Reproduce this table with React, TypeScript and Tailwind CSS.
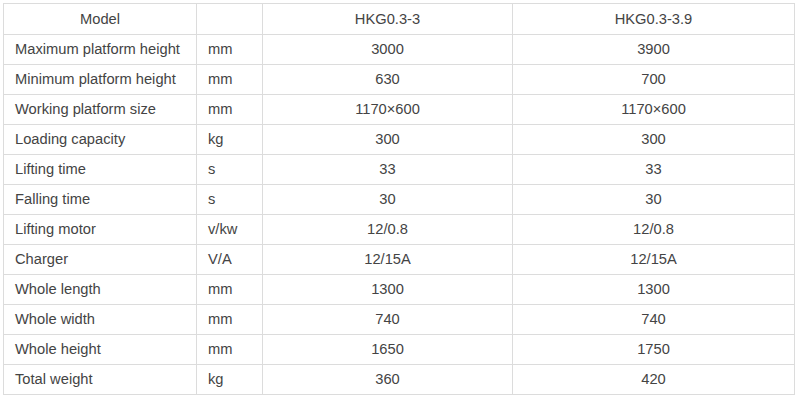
import React from "react";

const rows: [string, string, string, string][] = [
  ["Maximum platform height", "mm", "3000", "3900"],
  ["Minimum platform height", "mm", "630", "700"],
  ["Working platform size", "mm", "1170×600", "1170×600"],
  ["Loading capacity", "kg", "300", "300"],
  ["Lifting time", "s", "33", "33"],
  ["Falling time", "s", "30", "30"],
  ["Lifting motor", "v/kw", "12/0.8", "12/0.8"],
  ["Charger", "V/A", "12/15A", "12/15A"],
  ["Whole length", "mm", "1300", "1300"],
  ["Whole width", "mm", "740", "740"],
  ["Whole height", "mm", "1650", "1750"],
  ["Total weight", "kg", "360", "420"],
];

export default function App() {
  return (
    <div className="w-[800px] h-[401px] bg-white pt-[3px] pl-[3px] font-['Liberation_Sans',Arial,sans-serif] text-[14.7px] text-[#444]">
      <table className="border-collapse w-[791px] table-fixed">
        <colgroup>
          <col className="w-[193px]" />
          <col className="w-[66px]" />
          <col className="w-[250px]" />
          <col className="w-[282px]" />
        </colgroup>
        <tbody>
          <tr className="h-[31px]">
            <td className="border border-[#dcdcdc] text-center p-0">Model</td>
            <td className="border border-[#dcdcdc] p-0"></td>
            <td className="border border-[#dcdcdc] text-center p-0">HKG0.3-3</td>
            <td className="border border-[#dcdcdc] text-center p-0">HKG0.3-3.9</td>
          </tr>
          {rows.map((r, i) => (
            <tr key={i} className="h-[30px]">
              <td className="border border-[#dcdcdc] pl-[11px] p-0">{r[0]}</td>
              <td className="border border-[#dcdcdc] pl-[11px] p-0">{r[1]}</td>
              <td className="border border-[#dcdcdc] text-center p-0">{r[2]}</td>
              <td className="border border-[#dcdcdc] text-center p-0">{r[3]}</td>
            </tr>
          ))}
        </tbody>
      </table>
    </div>
  );
}
